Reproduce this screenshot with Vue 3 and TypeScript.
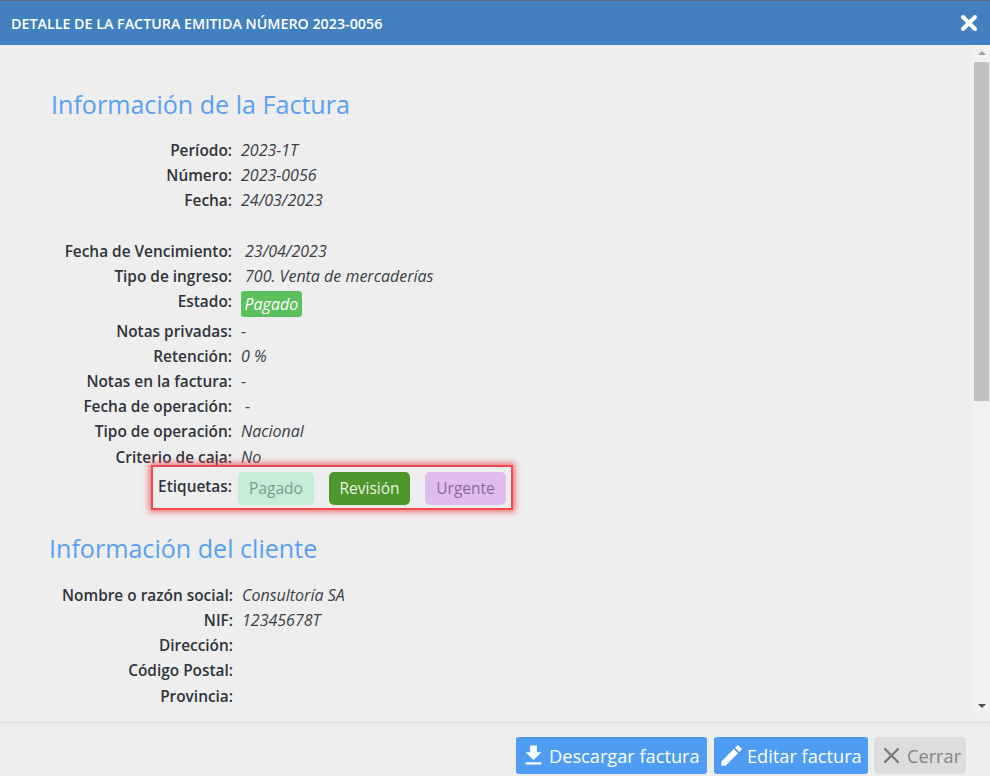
<script setup lang="ts">
interface Row { label: string; value: string; wide?: boolean }
const first: Row[] = [
  { label: 'Período:', value: '2023-1T' },
  { label: 'Número:', value: '2023-0056' },
  { label: 'Fecha:', value: '24/03/2023' },
]
const second: Row[] = [
  { label: 'Fecha de Vencimiento:', value: '23/04/2023', wide: true },
  { label: 'Tipo de ingreso:', value: '700. Venta de mercaderías', wide: true },
]
const third: Row[] = [
  { label: 'Notas privadas:', value: '-' },
  { label: 'Retención:', value: '0 %' },
  { label: 'Notas en la factura:', value: '-' },
  { label: 'Fecha de operación:', value: '-', wide: true },
  { label: 'Tipo de operación:', value: 'Nacional' },
  { label: 'Criterio de caja:', value: 'No' },
]
const client: Row[] = [
  { label: 'Nombre o razón social:', value: 'Consultoría SA' },
  { label: 'NIF:', value: '12345678T' },
  { label: 'Dirección:', value: '' },
  { label: 'Código Postal:', value: '' },
  { label: 'Provincia:', value: '' },
]
</script>

<template>
  <div class="modal">
    <header class="top">
      <h1>DETALLE DE LA FACTURA EMITIDA NÚMERO 2023-0056</h1>
      <svg class="top-close" width="18" height="18" viewBox="0 0 18 18" aria-hidden="true">
        <path d="M3 3 15 15M15 3 3 15" stroke="#fff" stroke-width="4" stroke-linecap="round" fill="none" />
      </svg>
    </header>

    <div class="middle">
      <main class="content">
        <h2 class="title-invoice">Información de la Factura</h2>
        <div class="rows">
          <div v-for="r in first" :key="r.label" class="row">
            <span class="label">{{ r.label }}</span>
            <span class="value">{{ r.value }}</span>
          </div>
        </div>
        <div class="rows gap-top">
          <div v-for="r in second" :key="r.label" class="row">
            <span class="label">{{ r.label }}</span>
            <span class="value" :class="{ wide: r.wide }">{{ r.value }}</span>
          </div>
          <div class="row status-row">
            <span class="label">Estado:</span>
            <span class="value"><span class="badge">Pagado</span></span>
          </div>
          <div v-for="r in third" :key="r.label" class="row">
            <span class="label">{{ r.label }}</span>
            <span class="value" :class="{ wide: r.wide }">{{ r.value }}</span>
          </div>
          <div class="row tags-row">
            <span class="highlight"></span>
            <span class="label">Etiquetas:</span>
            <div class="tags">
              <span class="tag tag-green">Pagado</span>
              <span class="tag tag-dark">Revisión</span>
              <span class="tag tag-purple">Urgente</span>
            </div>
          </div>
        </div>

        <h2 class="title-client">Información del cliente</h2>
        <div class="rows client">
          <div v-for="r in client" :key="r.label" class="row">
            <span class="label">{{ r.label }}</span>
            <span class="value">{{ r.value }}</span>
          </div>
        </div>
      </main>

      <div class="scrollbar">
        <span class="arrow arrow-up"></span>
        <span class="thumb"></span>
        <span class="arrow arrow-down"></span>
      </div>
    </div>

    <footer class="bottom">
      <button class="btn btn-blue download">
        <svg width="27" height="27" viewBox="0 0 24 24" aria-hidden="true"><path fill="#fff" d="M19 9h-4V3H9v6H5l7 7 7-7zM5 18v2h14v-2H5z" /></svg>
        Descargar factura
      </button>
      <button class="btn btn-blue edit">
        <svg width="27" height="27" viewBox="0 0 24 24" aria-hidden="true"><path fill="#fff" d="M3 17.25V21h3.75L17.81 9.94l-3.75-3.75L3 17.25zM20.71 7.04c.39-.39.39-1.02 0-1.41l-2.34-2.34c-.39-.39-1.02-.39-1.41 0l-1.83 1.83 3.75 3.75 1.83-1.83z" /></svg>
        Editar factura
      </button>
      <button class="btn btn-grey close">
        <svg width="27" height="27" viewBox="0 0 24 24" aria-hidden="true"><path fill="#777" d="M19 6.41L17.59 5 12 10.59 6.41 5 5 6.41 10.59 12 5 17.59 6.41 19 12 13.41 17.59 19 19 17.59 13.41 12z" /></svg>
        Cerrar
      </button>
    </footer>
  </div>
</template>

<style>
html, body { margin: 0; background: #eee; }
</style>

<style scoped>
.modal {
  width: 990px;
  height: 776px;
  display: flex;
  flex-direction: column;
  overflow: hidden;
  background: #eee;
  font-family: "Open Sans", sans-serif;
  color: #2f343b;
}
.top {
  flex: none;
  box-sizing: border-box;
  border-top: 1px solid #5f6b78;
  height: 45px;
  background: #4280bf;
  color: #fff;
  display: flex;
  align-items: center;
  justify-content: space-between;
  padding: 0 12px 0 11px;
}
.top h1 { margin: 0; font-size: 14.27px; font-weight: 600; }
.top-close { display: block; }
.middle { flex: 1; min-height: 0; display: flex; }
.content { flex: 1; min-width: 0; overflow: hidden; }
h2 {
  margin: 0;
  font-size: 25.1px;
  font-weight: 500;
  line-height: 32px;
  color: #5a9ff2;
}
.title-invoice { margin: 43px 0 0 51px; }
.title-client { margin: 27.4px 0 0 49px; }
.rows { margin-top: 17.8px; }
.gap-top { margin-top: 25.4px; }
.client { margin-top: 18.6px; }
.row {
  display: grid;
  grid-template-columns: 232px 1fr;
  column-gap: 9px;
  font-size: 15.4px;
  line-height: 25.2px;
  position: relative;
}
.client .row { grid-template-columns: 233px 1fr; }
.label { text-align: right; font-weight: 600; }
.value { font-style: italic; font-size: 16px; color: #3a3f46; }
.value.wide { padding-left: 4px; }
.status-row { height: 29.3px; }
.badge {
  display: inline-block;
  height: 26px;
  line-height: 26px;
  padding: 0 3.5px;
  border-radius: 3px;
  background: #5cc05c;
  color: #fff;
  font-size: 16px;
  font-weight: 500;
  margin-top: 2px;
}
.tags-row { margin-top: 2px; height: 33px; line-height: 29px; }
.tags { display: flex; gap: 15px; margin-left: -3px; }
.tag {
  height: 33px;
  line-height: 33px;
  border-radius: 5px;
  text-align: center;
  font-size: 15.5px;
}
.tag-green { width: 76px; background: #c5ecd6; color: #7c9c8c; }
.tag-dark { width: 81px; background: #4f962d; color: #e9f5e0; }
.tag-purple { width: 81px; background: #e1bcf0; color: #8a6a9c; }
.highlight {
  position: absolute;
  left: 151px;
  top: -7px;
  width: 362px;
  height: 45px;
  box-sizing: border-box;
  border: 2px solid #ef4a4f;
  box-shadow: 0 0 6px 2px rgba(239, 74, 79, .75);
  pointer-events: none;
}
.scrollbar {
  width: 17px;
  height: 668px;
  flex: none;
  background: #f1f1f1;
  display: flex;
  flex-direction: column;
  align-items: center;
  position: relative;
}
.thumb {
  width: 15px;
  height: 339px;
  margin-top: 17px;
  background: #c1c1c1;
}
.arrow {
  width: 0;
  height: 0;
  border-left: 4px solid transparent;
  border-right: 4px solid transparent;
  position: absolute;
}
.arrow-up { top: 6px; border-bottom: 4px solid #a3a3a3; }
.arrow-down { bottom: 5px; border-top: 4px solid #505050; }
.bottom {
  height: 54px;
  flex: none;
  box-sizing: border-box;
  border-top: 1px solid #dcdcdc;
  display: flex;
  justify-content: flex-end;
  align-items: flex-start;
  padding: 14px 24px 0 0;
  gap: 7px;
}
.btn {
  height: 37px;
  border: 0;
  border-radius: 3px;
  display: flex;
  align-items: center;
  justify-content: flex-start;
  gap: 2px;
  padding: 0 0 0 4px;
  font-family: "Open Sans", sans-serif;
  font-size: 18.2px;
  white-space: nowrap;
}
.btn svg { flex: none; }
.btn-blue { background: #4f9cf3; color: #fff; }
.btn-grey { background: #dddddd; color: #848484; }
.download { width: 191px; }
.edit { width: 154px; }
.close { width: 92px; margin-left: -1px; }
</style>
